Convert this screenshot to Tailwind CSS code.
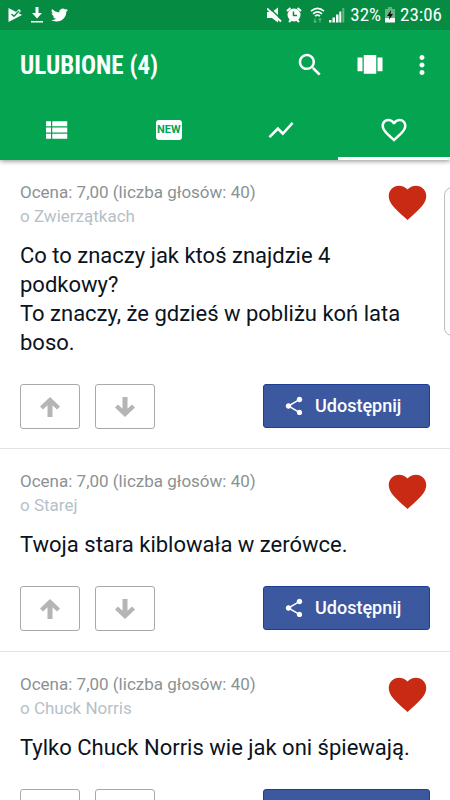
<!DOCTYPE html>
<html lang="pl">
<head>
<meta charset="utf-8">
<meta name="viewport" content="width=device-width, initial-scale=1">
<title>Ulubione</title>
<script src="https://cdn.jsdelivr.net/npm/@tailwindcss/browser@4"></script>
</head>
<body class="bg-white font-[Roboto,'Noto_Sans',sans-serif]">
<svg class="hidden">
  <symbol id="heart" viewBox="0 0 24 24"><path d="M12 21.35l-1.45-1.32C5.4 15.36 2 12.28 2 8.5 2 5.42 4.42 3 7.5 3c1.74 0 3.41.81 4.5 2.09C13.09 3.81 14.76 3 16.5 3 19.58 3 22 5.42 22 8.5c0 3.78-3.4 6.86-8.55 11.54L12 21.35z"/></symbol>
  <symbol id="up" viewBox="0 0 20 20"><path d="M10 0 L20 9.500 L17 12.500 L12.500 8.200 V20 H7.500 V8.200 L3 12.500 L0 9.500 Z"/></symbol>
  <symbol id="share" viewBox="0 0 24 24"><path d="M18 16.080c-.76 0-1.440.3-1.960.77L8.910 12.700c.05-.23.09-.46.09-.7s-.04-.47-.09-.7l7.050-4.110c.54.5 1.250.81 2.040.81 1.660 0 3-1.340 3-3s-1.340-3-3-3-3 1.340-3 3c0 .24.04.47.09.7L8.040 9.810C7.500 9.310 6.790 9 6 9c-1.660 0-3 1.340-3 3s1.340 3 3 3c.79 0 1.500-.31 2.040-.81l7.120 4.160c-.05.21-.08.43-.08.65 0 1.610 1.310 2.920 2.920 2.920s2.920-1.310 2.920-2.920-1.310-2.920-2.920-2.920z"/></symbol>
</svg>

<header class="relative z-10 bg-[#04a451] text-white shadow-[0_1px_5px_rgba(0,0,0,0.45)]">
  <div class="flex h-[30px] items-center justify-between bg-[#058b42] px-2">
    <div class="flex items-center gap-2">
      <svg class="h-4 w-[15px]" viewBox="0 0 15 16"><path fill="#fff" d="M.5 1 14 8 .5 15z"/><path fill="#fff" d="M8 5 11 2l2 2-3 3z"/><path fill="none" stroke="#058b42" stroke-width="1.300" d="M3.500 7 6 9.300 11 4"/></svg>
      <svg class="h-4 w-3" viewBox="0 0 12 16" fill="#fff"><path d="M4.500 0h3v6H11l-5 5.500L1 6h3.500zM0 14h12v1.600H0z"/></svg>
      <svg class="h-4 w-[17px]" viewBox="0 0 24 24" preserveAspectRatio="none" fill="#fff"><path d="M23.950 4.570a10 10 0 0 1-2.820.77 4.960 4.960 0 0 0 2.160-2.720c-.95.56-2 .96-3.130 1.190a4.920 4.920 0 0 0-8.380 4.480C7.690 8.090 4.070 6.130 1.640 3.160a4.920 4.920 0 0 0 1.520 6.570 4.900 4.900 0 0 1-2.230-.61v.06c0 2.380 1.700 4.370 3.950 4.820a5 5 0 0 1-2.210.09 4.940 4.940 0 0 0 4.600 3.420A9.870 9.870 0 0 1 0 19.540a13.990 13.990 0 0 0 7.550 2.210c9.050 0 14-7.500 14-13.980 0-.21 0-.42-.02-.63a9.940 9.940 0 0 0 2.420-2.570z"/></svg>
    </div>
    <div class="flex items-center gap-1">
      <svg class="h-4 w-[15px]" viewBox="0 0 15 16" fill="#fff"><path d="M0 5h5l6-4.500v15L5 11H0z"/><path d="M1.500 0 15 13" stroke="#058b42" stroke-width="1.500"/><path d="M0 1.500 14 14.500" stroke="#fff" stroke-width="2"/></svg>
      <svg class="h-4 w-4" viewBox="0 0 16 16"><path d="M1 4 4.500 1M15 4 11.500 1M3 15l2-2M13 15l-2-2" stroke="#fff" stroke-width="2"/><circle cx="8" cy="8" r="6.500" fill="#fff"/><path d="M7.500 4.500v4H11" fill="none" stroke="#058b42" stroke-width="1.500"/></svg>
      <svg class="ml-1 h-4 w-[15px]" viewBox="0 0 15 16" fill="none" stroke="#fff" stroke-width="1.600"><path d="M1 4.200Q7.500-1.600 14 4.200M3 6.800Q7.500 2.800 12 6.800M5 9.200Q7.500 7 10 9.200"/><path d="M5 15.500v-4M3.500 14 5 15.500 6.500 14M10 11.500v4M8.500 13 10 11.500l1.500 1.500" stroke="#70c08f" stroke-width="1"/></svg>
      <svg class="h-4 w-4" viewBox="0 0 16 16" fill="#fff"><path d="M0 13h2.500v2.500H0zM3.500 10.500H6v5H3.500zM7 7.500h2.500v8H7zM10.300 4.500h2v11h-2z"/><path d="M13.300 1h2v14.500h-2z" fill="#65b583"/></svg>
      <span class="ml-px font-['Roboto_Condensed','Liberation_Sans_Narrow',Roboto,sans-serif] text-[19px] leading-[30px]">32%</span>
      <svg class="h-4 w-2.5" viewBox="0 0 10 16"><path d="M3 0h4v2h3v9H0V2h3z" fill="#65b583"/><path d="M0 11h10v4.500H0z" fill="#fff"/><path d="M6 3 2 9h2.500L4 13l4-6H5.500z" fill="#111"/></svg>
      <span class="ml-px font-['Roboto_Condensed','Liberation_Sans_Narrow',Roboto,sans-serif] text-[19px] leading-[30px]">23:06</span>
    </div>
  </div>

  <div class="flex h-[70px] items-center pr-[13px] pl-5">
    <h1 class="flex-1 pt-0.5 font-['Roboto_Condensed','Liberation_Sans_Narrow',Roboto,sans-serif] text-[25px] font-bold">ULUBIONE (4)</h1>
    <button aria-label="Szukaj" class="mr-[30px]"><svg class="size-[30px]" viewBox="0 0 24 24" fill="#fff"><path d="M15.500 14h-.79l-.28-.27C15.410 12.590 16 11.110 16 9.500 16 5.910 13.090 3 9.500 3S3 5.910 3 9.500 5.910 16 9.500 16c1.610 0 3.090-.59 4.230-1.570l.27.28v.79l5 4.990L20.490 19l-4.990-5zm-6 0C7.010 14 5 11.990 5 9.500S7.010 5 9.500 5 14 7.010 14 9.500 11.990 14 9.500 14z"/></svg></button>
    <button aria-label="Widok karuzeli" class="mr-[22px]"><svg class="size-[30px]" viewBox="0 0 24 24" fill="#fff"><path d="M7 19h10V4H7v15zm-5-2h4V6H2v11zM18 6v11h4V6h-4z"/></svg></button>
    <button aria-label="Więcej"><svg class="size-[30px]" viewBox="0 0 24 24" fill="#fff"><path d="M12 8c1.100 0 2-.9 2-2s-.9-2-2-2-2 .9-2 2 .9 2 2 2zm0 2c-1.100 0-2 .9-2 2s.9 2 2 2 2-.9 2-2-.9-2-2-2zm0 6c-1.100 0-2 .9-2 2s.9 2 2 2 2-.9 2-2-.9-2-2-2z"/></svg></button>
  </div>

  <nav class="grid h-[60px] grid-cols-4">
    <a href="#lista" aria-label="Lista" class="flex items-center justify-center border-y-3 border-transparent"><svg class="size-[30px]" viewBox="0 0 24 24" fill="#fff"><path d="M4 14h4v-4H4v4zm0 5h4v-4H4v4zM4 9h4V5H4v4zm5 5h12v-4H9v4zm0 5h12v-4H9v4zM9 5v4h12V5H9z"/></svg></a>
    <a href="#nowe" class="flex items-center justify-center border-y-3 border-transparent"><span class="flex h-5 w-[26px] items-center justify-center rounded-[3px] bg-white text-[11px] leading-5 font-bold text-[#04a451]">NEW</span></a>
    <a href="#trendy" aria-label="Trendy" class="flex items-center justify-center border-y-3 border-transparent"><svg class="size-[30px]" viewBox="0 0 24 24" fill="#fff"><path d="M3.500 18.490l6-6.010 4 4L22 6.920l-1.410-1.410-7.090 7.970-4-4L2 16.990z"/></svg></a>
    <a href="#ulubione" aria-label="Ulubione" aria-current="page" class="flex items-center justify-center border-y-3 border-t-transparent border-b-white"><svg class="size-[30px]" viewBox="0 0 24 24" fill="#fff"><path d="M16.500 3c-1.740 0-3.410.81-4.500 2.090C10.910 3.810 9.240 3 7.500 3 4.420 3 2 5.420 2 8.500c0 3.780 3.400 6.860 8.550 11.540L12 21.350l1.450-1.320C18.600 15.360 22 12.280 22 8.500 22 5.420 19.580 3 16.500 3zm-4.400 15.550l-.1.100-.1-.1C7.140 14.240 4 11.390 4 8.500 4 6.500 5.500 5 7.500 5c1.540 0 3.040.99 3.570 2.360h1.870C13.460 5.990 14.960 5 16.500 5c2 0 3.500 1.500 3.500 3.500 0 2.890-3.140 5.740-7.900 10.050z"/></svg></a>
  </nav>
</header>

<main class="relative overflow-x-clip">
  <div class="absolute top-[27px] -right-3 h-[149px] w-[18px] rounded-lg border border-[#bdbdbd] bg-[#fcfcfc]"></div>

  <article class="border-b border-[#e2e2e2] px-5 pt-5 pb-[19px]">
    <div class="flex justify-between">
      <div class="text-[17px] leading-6"><p class="text-[#8a9293]">Ocena: 7,00 (liczba głosów: 40)</p><p class="text-[#b5c1c8]">o Zwierzątkach</p></div>
      <button aria-label="Usuń z ulubionych" class="size-[45px] text-[#c92a14]"><svg class="size-full" fill="currentColor"><use href="#heart"/></svg></button>
    </div>
    <p class="mt-[13px] text-[22px] leading-[29px] text-[#0b1320]">Co to znaczy jak ktoś znajdzie 4<br>podkowy?<br>To znaczy, że gdzieś w pobliżu koń lata boso.</p>
    <div class="mt-[27px] flex items-start gap-[15px]">
      <button aria-label="Głosuj za" class="flex h-[45px] w-[60px] items-center justify-center rounded-[3px] border border-[#a9a9a9]"><svg class="size-5" fill="#b5b5b5"><use href="#up"/></svg></button>
      <button aria-label="Głosuj przeciw" class="flex h-[45px] w-[60px] items-center justify-center rounded-[3px] border border-[#a9a9a9]"><svg class="size-5 rotate-180" fill="#b5b5b5"><use href="#up"/></svg></button>
      <button class="ml-auto flex h-11 w-[167px] items-center gap-2.5 rounded-[3px] border border-[#1c3f95] bg-[#3c589e] pl-[19px] text-lg font-medium text-white"><svg class="size-[22px]" fill="#fff"><use href="#share"/></svg>Udostępnij</button>
    </div>
  </article>

  <article class="border-b border-[#e2e2e2] px-5 pt-5 pb-5">
    <div class="flex justify-between">
      <div class="text-[17px] leading-6"><p class="text-[#8a9293]">Ocena: 7,00 (liczba głosów: 40)</p><p class="text-[#b5c1c8]">o Starej</p></div>
      <button aria-label="Usuń z ulubionych" class="size-[45px] text-[#c92a14]"><svg class="size-full" fill="currentColor"><use href="#heart"/></svg></button>
    </div>
    <p class="mt-[13px] text-[22px] leading-[29px] text-[#0b1320]">Twoja stara kiblowała w zerówce.</p>
    <div class="mt-[27px] flex items-start gap-[15px]">
      <button aria-label="Głosuj za" class="flex h-[45px] w-[60px] items-center justify-center rounded-[3px] border border-[#a9a9a9]"><svg class="size-5" fill="#b5b5b5"><use href="#up"/></svg></button>
      <button aria-label="Głosuj przeciw" class="flex h-[45px] w-[60px] items-center justify-center rounded-[3px] border border-[#a9a9a9]"><svg class="size-5 rotate-180" fill="#b5b5b5"><use href="#up"/></svg></button>
      <button class="ml-auto flex h-11 w-[167px] items-center gap-2.5 rounded-[3px] border border-[#1c3f95] bg-[#3c589e] pl-[19px] text-lg font-medium text-white"><svg class="size-[22px]" fill="#fff"><use href="#share"/></svg>Udostępnij</button>
    </div>
  </article>

  <article class="border-b border-[#e2e2e2] px-5 pt-5 pb-5">
    <div class="flex justify-between">
      <div class="text-[17px] leading-6"><p class="text-[#8a9293]">Ocena: 7,00 (liczba głosów: 40)</p><p class="text-[#b5c1c8]">o Chuck Norris</p></div>
      <button aria-label="Usuń z ulubionych" class="size-[45px] text-[#c92a14]"><svg class="size-full" fill="currentColor"><use href="#heart"/></svg></button>
    </div>
    <p class="mt-[13px] text-[22px] leading-[29px] text-[#0b1320]">Tylko Chuck Norris wie jak oni śpiewają.</p>
    <div class="mt-[27px] flex items-start gap-[15px]">
      <button aria-label="Głosuj za" class="flex h-[45px] w-[60px] items-center justify-center rounded-[3px] border border-[#a9a9a9]"><svg class="size-5" fill="#b5b5b5"><use href="#up"/></svg></button>
      <button aria-label="Głosuj przeciw" class="flex h-[45px] w-[60px] items-center justify-center rounded-[3px] border border-[#a9a9a9]"><svg class="size-5 rotate-180" fill="#b5b5b5"><use href="#up"/></svg></button>
      <button class="ml-auto flex h-11 w-[167px] items-center gap-2.5 rounded-[3px] border border-[#1c3f95] bg-[#3c589e] pl-[19px] text-lg font-medium text-white"><svg class="size-[22px]" fill="#fff"><use href="#share"/></svg>Udostępnij</button>
    </div>
  </article>
</main>
</body>
</html>
